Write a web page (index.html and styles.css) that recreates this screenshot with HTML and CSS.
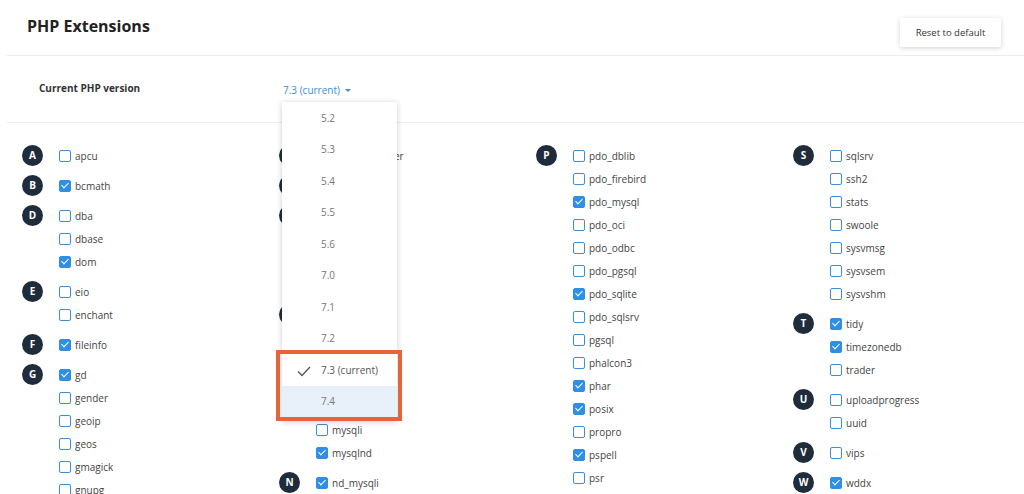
FILE: index.html
```html
<!DOCTYPE html>
<html lang="en">
  <head>
    <meta charset="UTF-8" />
    <meta name="viewport" content="width=device-width, initial-scale=1.0" />
    <title>PHP Extensions</title>
    <link rel="stylesheet" href="styles.css">
  </head>
  <body>
    <div class="page">
      <div class="header">
        <h1>PHP Extensions</h1>
        <button class="btn-reset">Reset to default</button>
      </div>

      <div class="version-row">
        <div class="version-label">Current PHP version</div>
        <div class="version-select">
          <span class="version-value">7.3 (current)<span class="caret"></span></span>

          <ul class="dropdown">
            <li>5.2</li>
            <li>5.3</li>
            <li>5.4</li>
            <li>5.5</li>
            <li>5.6</li>
            <li>7.0</li>
            <li>7.1</li>
            <li>7.2</li>
            <li class="selected">
              <svg class="tick" width="14" height="11" viewBox="0 0 14 11"><path d="M1 5.5 L5 9.5 L13 1" fill="none" stroke="#555" stroke-width="1.3"/></svg>
              7.3 (current)
            </li>
            <li class="hover">7.4</li>
            <div class="annotation"></div>
          </ul>
        </div>
      </div>

      <div class="columns">
        <div class="column">
          <div class="group">
            <span class="letter">A</span>
            <ul class="items">
              <li><span class="cb"></span>apcu</li>
            </ul>
          </div>
          <div class="group">
            <span class="letter">B</span>
            <ul class="items">
              <li><span class="cb checked"></span>bcmath</li>
            </ul>
          </div>
          <div class="group">
            <span class="letter">D</span>
            <ul class="items">
              <li><span class="cb"></span>dba</li>
              <li><span class="cb"></span>dbase</li>
              <li><span class="cb checked"></span>dom</li>
            </ul>
          </div>
          <div class="group">
            <span class="letter">E</span>
            <ul class="items">
              <li><span class="cb"></span>eio</li>
              <li><span class="cb"></span>enchant</li>
            </ul>
          </div>
          <div class="group">
            <span class="letter">F</span>
            <ul class="items">
              <li><span class="cb checked"></span>fileinfo</li>
            </ul>
          </div>
          <div class="group">
            <span class="letter">G</span>
            <ul class="items">
              <li><span class="cb checked"></span>gd</li>
              <li><span class="cb"></span>gender</li>
              <li><span class="cb"></span>geoip</li>
              <li><span class="cb"></span>geos</li>
              <li><span class="cb"></span>gmagick</li>
              <li><span class="cb"></span>gnupg</li>
            </ul>
          </div>
        </div>

        <div class="column">
          <div class="group">
            <span class="letter">I</span>
            <ul class="items">
              <li><span class="cb"></span>ioncube_loader</li>
            </ul>
          </div>
          <div class="group">
            <span class="letter">J</span>
            <ul class="items">
              <li><span class="cb checked"></span>json</li>
            </ul>
          </div>
          <div class="group">
            <span class="letter">L</span>
            <ul class="items">
              <li><span class="cb"></span>ldap</li>
              <li><span class="cb"></span>leveldb</li>
              <li><span class="cb"></span>libsodium</li>
              <li><span class="cb"></span>lzf</li>
            </ul>
          </div>
          <div class="group">
            <span class="letter">M</span>
            <ul class="items">
              <li><span class="cb"></span>mailparse</li>
              <li><span class="cb checked"></span>mbstring</li>
              <li><span class="cb"></span>memcached</li>
              <li><span class="cb"></span>mongodb</li>
              <li><span class="cb"></span>msgpack</li>
              <li><span class="cb"></span>mysqli</li>
              <li><span class="cb checked"></span>mysqlnd</li>
            </ul>
          </div>
          <div class="group">
            <span class="letter">N</span>
            <ul class="items">
              <li><span class="cb checked"></span>nd_mysqli</li>
            </ul>
          </div>
        </div>

        <div class="column">
          <div class="group">
            <span class="letter">P</span>
            <ul class="items">
              <li><span class="cb"></span>pdo_dblib</li>
              <li><span class="cb"></span>pdo_firebird</li>
              <li><span class="cb checked"></span>pdo_mysql</li>
              <li><span class="cb"></span>pdo_oci</li>
              <li><span class="cb"></span>pdo_odbc</li>
              <li><span class="cb"></span>pdo_pgsql</li>
              <li><span class="cb checked"></span>pdo_sqlite</li>
              <li><span class="cb"></span>pdo_sqlsrv</li>
              <li><span class="cb"></span>pgsql</li>
              <li><span class="cb"></span>phalcon3</li>
              <li><span class="cb checked"></span>phar</li>
              <li><span class="cb checked"></span>posix</li>
              <li><span class="cb"></span>propro</li>
              <li><span class="cb checked"></span>pspell</li>
              <li><span class="cb"></span>psr</li>
            </ul>
          </div>
        </div>

        <div class="column">
          <div class="group">
            <span class="letter">S</span>
            <ul class="items">
              <li><span class="cb"></span>sqlsrv</li>
              <li><span class="cb"></span>ssh2</li>
              <li><span class="cb"></span>stats</li>
              <li><span class="cb"></span>swoole</li>
              <li><span class="cb"></span>sysvmsg</li>
              <li><span class="cb"></span>sysvsem</li>
              <li><span class="cb"></span>sysvshm</li>
            </ul>
          </div>
          <div class="group">
            <span class="letter">T</span>
            <ul class="items">
              <li><span class="cb checked"></span>tidy</li>
              <li><span class="cb checked"></span>timezonedb</li>
              <li><span class="cb"></span>trader</li>
            </ul>
          </div>
          <div class="group">
            <span class="letter">U</span>
            <ul class="items">
              <li><span class="cb"></span>uploadprogress</li>
              <li><span class="cb"></span>uuid</li>
            </ul>
          </div>
          <div class="group">
            <span class="letter">V</span>
            <ul class="items">
              <li><span class="cb"></span>vips</li>
            </ul>
          </div>
          <div class="group">
            <span class="letter">W</span>
            <ul class="items">
              <li><span class="cb checked"></span>wddx</li>
            </ul>
          </div>
        </div>
      </div>
    </div>
  </body>
</html>
```

FILE: styles.css
```css
html,
body {
  margin: 0;
  height: 100%;
  overflow: hidden;
  background: #fff;
  font-family: "Open Sans", "Liberation Sans", sans-serif;
  color: #444;
}

ul {
  list-style: none;
  margin: 0;
  padding: 0;
}

.page {
  margin-left: 7px;
}

/* top bar */
.header {
  display: flex;
  justify-content: space-between;
  align-items: flex-start;
  height: 55px;
  padding: 0 23px 0 20px;
  border-bottom: 1px solid #ececec;
}

.header h1 {
  margin: 14px 0 0;
  font-size: 16px;
  line-height: 24px;
  font-weight: 700;
  color: #222;
}

.btn-reset {
  margin-top: 18px;
  width: 101px;
  height: 29px;
  border: 0;
  border-radius: 2px;
  background: #fff;
  box-shadow: 0 1px 5px rgba(0, 0, 0, 0.18);
  font-family: inherit;
  font-size: 9.5px;
  color: #333;
}

/* version selector */
.version-row {
  display: flex;
  align-items: center;
  height: 66px;
  padding-left: 32px;
  border-bottom: 1px solid #ececec;
}

.version-label {
  width: 244px;
  margin-bottom: 3px;
  font-size: 10px;
  font-weight: 700;
  color: #333;
}

.version-select {
  position: relative;
  margin-bottom: 3px;
}

.version-value {
  font-size: 10px;
  line-height: 16px;
  color: #3d8fd6;
}

.caret {
  display: inline-block;
  margin-left: 5px;
  vertical-align: middle;
  border-left: 3px solid transparent;
  border-right: 3px solid transparent;
  border-top: 3px solid #3d8fd6;
}

.dropdown {
  position: absolute;
  z-index: 5;
  top: 25px;
  left: -1px;
  width: 115px;
  padding: 1px 0 3px;
  background: #fff;
  box-shadow: 0 1px 6px rgba(0, 0, 0, 0.2);
}

.dropdown li {
  position: relative;
  height: 31.5px;
  line-height: 31.5px;
  padding-left: 39px;
  font-size: 10px;
  color: #777;
}

.dropdown li.selected {
  color: #555;
}

.dropdown li.hover {
  background: #e8f1fa;
}

.tick {
  position: absolute;
  left: 15px;
  top: 11px;
}

.annotation {
  position: absolute;
  left: -6px;
  top: 248px;
  width: 118px;
  height: 63px;
  border: 4px solid #e8633a;
}

/* extension list */
.columns {
  display: grid;
  grid-template-columns: repeat(4, 257px);
  padding: 21px 0 0 15px;
}

.group {
  display: flex;
  align-items: flex-start;
  margin-bottom: 7px;
}

.letter {
  flex: none;
  width: 21px;
  height: 21px;
  margin: 1px 16px 0 0;
  border-radius: 50%;
  background: #1f2c3c;
  color: #fff;
  font-size: 10px;
  font-weight: 700;
  line-height: 21px;
  text-align: center;
}

.items li {
  display: flex;
  align-items: center;
  gap: 4px;
  height: 23px;
  font-size: 10px;
  color: #444;
}

.cb {
  position: relative;
  box-sizing: border-box;
  width: 12px;
  height: 12px;
  border: 1.5px solid #3a8fd8;
  border-radius: 2px;
  background: #fff;
}

.cb.checked {
  border-color: #2f8ee6;
  background: #2f8ee6;
}

.cb.checked::after {
  content: "";
  position: absolute;
  left: 2.5px;
  top: 0px;
  width: 3px;
  height: 6px;
  border-right: 1.5px solid #fff;
  border-bottom: 1.5px solid #fff;
  transform: rotate(45deg);
}
```
